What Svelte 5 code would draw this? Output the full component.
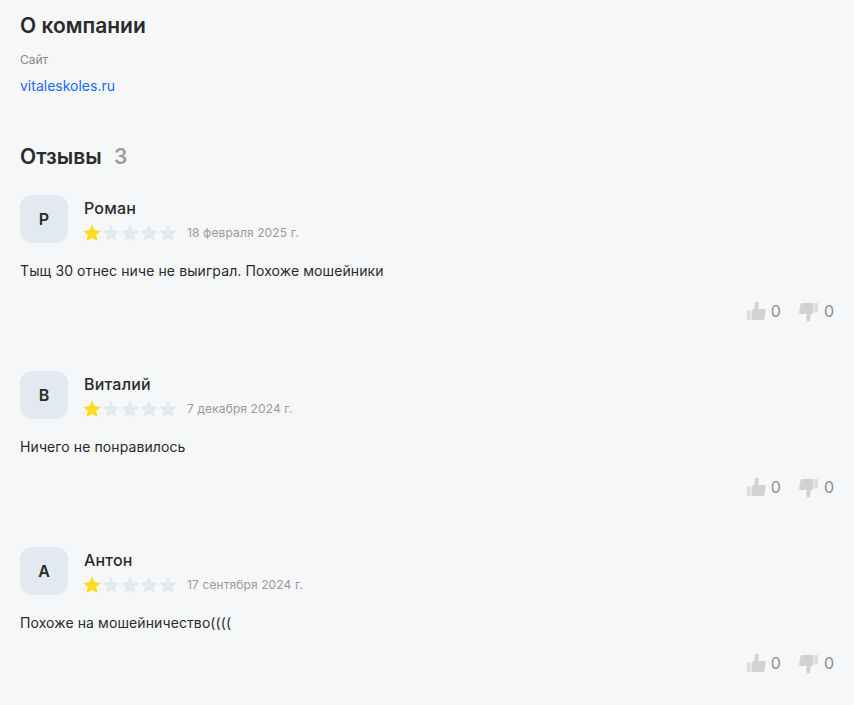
<script>
	const reviews = [
		{ initial: 'Р', name: 'Роман', date: '18 февраля 2025 г.', text: 'Тыщ 30 отнес ниче не выиграл. Похоже мошейники' },
		{ initial: 'В', name: 'Виталий', date: '7 декабря 2024 г.', text: 'Ничего не понравилось' },
		{ initial: 'А', name: 'Антон', date: '17 сентября 2024 г.', text: 'Похоже на мошейничество((((' }
	];
	const stars = [1, 2, 3, 4, 5];
	const rating = 1;
</script>

{#snippet thumb()}
	<path class="cuff" d="M1 9.500h3.500V19H2a1 1 0 0 1-1-1z" />
	<path d="M5.500 9.500L8.500 7 9 1.500C9 .5 12.500 0 12.800 2.500L12.500 8h6c1 0 1.500 1 1.300 2l-1.300 7.500c-.2 1-1 1.500-2 1.500h-11z" />
{/snippet}

<main class="page">
	<section class="about">
		<h2>О компании</h2>
		<div class="label">Сайт</div>
		<a class="site" href="#site">vitaleskoles.ru</a>
	</section>

	<section class="reviews">
		<h2>Отзывы <span class="count">3</span></h2>
		{#each reviews as r}
			<article class="review">
				<header class="head">
					<div class="avatar">{r.initial}</div>
					<div class="meta">
						<div class="name">{r.name}</div>
						<div class="rating">
							<div class="stars">
								{#each stars as s}
									<svg class="star" class:on={s <= rating} viewBox="0 0 20 20" width="20" height="20">
										<path d="M10 1.600l2.600 5.600 6.100.7-4.500 4.200 1.200 6L10 15.100l-5.400 3 1.200-6L1.300 7.900l6.100-.7z" />
									</svg>
								{/each}
							</div>
							<span class="date">{r.date}</span>
						</div>
					</div>
				</header>
				<p class="text">{r.text}</p>
				<footer class="votes">
					<span class="vote">
						<svg viewBox="0 0 20 20" width="20" height="20">
							{@render thumb()}
						</svg>
						0
					</span>
					<span class="vote">
						<svg viewBox="0 0 20 20" width="20" height="20">
							<g transform="translate(0 1) rotate(180 10 10)">
								{@render thumb()}
							</g>
						</svg>
						0
					</span>
				</footer>
			</article>
		{/each}
	</section>
</main>

<style>
	:global(body) {
		margin: 0;
		background: #f6f7f9;
	}

	.page {
		padding: 12px 20px 0;
		font-family: Inter, "Liberation Sans", sans-serif;
		color: #2b2b2b;
		height: 693px;
		overflow: hidden;
	}

	h2 {
		margin: 0;
		font-size: 21px;
		line-height: 28px;
		font-weight: 600;
	}

	.label {
		margin-top: 11px;
		font-size: 12px;
		line-height: 18px;
		color: #85878a;
	}

	.site {
		display: block;
		margin-top: 7px;
		font-size: 14px;
		line-height: 20px;
		color: #1a66ff;
		text-decoration: none;
	}

	.reviews {
		margin-top: 47px;
	}

	.count {
		margin-left: 7px;
		color: #9b9b9b;
	}

	.review {
		margin-top: 24px;
		margin-bottom: 48px;
	}

	.head {
		display: flex;
		gap: 16px;
	}

	.avatar {
		width: 48px;
		height: 48px;
		border-radius: 12px;
		background: #e3e9f1;
		display: flex;
		align-items: center;
		justify-content: center;
		font-size: 16px;
		font-weight: 600;
	}

	.name {
		font-size: 16px;
		line-height: 24px;
		font-weight: 500;
		margin-top: 1px;
		letter-spacing: 0.2px;
	}

	.rating {
		display: flex;
		align-items: center;
		margin-top: 3px;
	}

	.stars {
		display: flex;
		margin-right: 10px;
		margin-left: -2px;
	}

	.star {
		display: block;
		margin-right: -1px;
		fill: #e3e9f1;
	}

	.star.on {
		fill: #ffdb1f;
	}

	.date {
		font-size: 12px;
		line-height: 18px;
		color: #9a9a9a;
		letter-spacing: 0.12px;
	}

	.text {
		margin: 17px 0 0;
		font-size: 14px;
		line-height: 22px;
		letter-spacing: 0.1px;
	}

	.votes {
		display: flex;
		justify-content: flex-end;
		gap: 18px;
		margin-top: 17px;
	}

	.vote {
		display: flex;
		align-items: center;
		gap: 5px;
		font-size: 16px;
		line-height: 24px;
		color: #8f8f8f;
	}

	.vote svg {
		fill: #d2d2d2;
	}

	.cuff {
		opacity: 0.7;
	}
</style>
